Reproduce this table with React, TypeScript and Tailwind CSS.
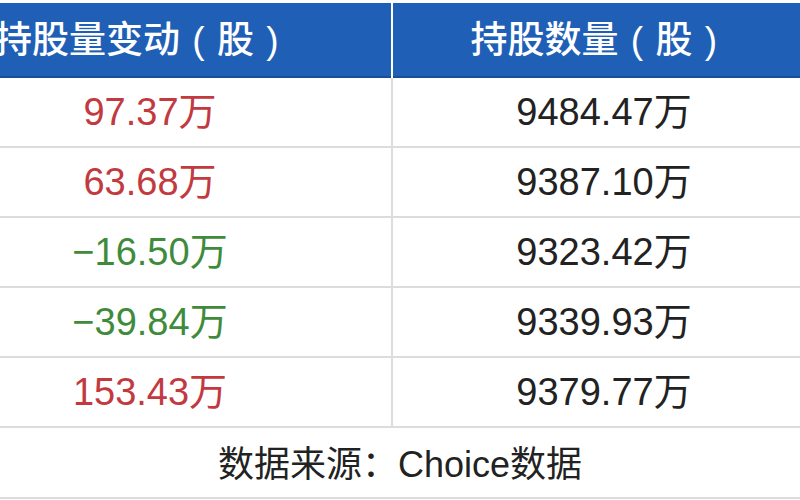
import React from "react";

const rows = [
  { change: "97.37万", color: "text-[#c23a40]", total: "9484.47万" },
  { change: "63.68万", color: "text-[#c23a40]", total: "9387.10万" },
  { change: "−16.50万", color: "text-[#3f8b3c]", total: "9323.42万" },
  { change: "−39.84万", color: "text-[#3f8b3c]", total: "9339.93万" },
  { change: "153.43万", color: "text-[#c23a40]", total: "9379.77万" },
];

function Paren({ ch }: { ch: string }) {
  return <span className="inline-block w-[1em] text-center font-normal">{ch}</span>;
}

export default function App() {
  return (
    <div className="w-[800px] h-[500px] overflow-hidden bg-white pt-[3px] font-['Liberation_Sans','Noto_Sans_CJK_SC',sans-serif]">
      <div className="-ml-[91px] w-[906px]">
        <div className="flex h-[75px] bg-[#1f60b6] text-white text-[37px] font-medium shadow-[inset_0_-2px_0_#174f9c]">
          <div className="w-[484px] flex items-center justify-center border-r-2 border-white pr-[14px]">
            <span>持股量变动</span>
            <Paren ch="(" />
            <span>股</span>
            <Paren ch=")" />
          </div>
          <div className="flex-1 flex items-center justify-center pr-[8px]">
            <span>持股数量</span>
            <Paren ch="(" />
            <span>股</span>
            <Paren ch=")" />
          </div>
        </div>
        {rows.map((r, i) => (
          <div key={i} className="flex h-[70px] border-b-2 border-[#dcdcdc] text-[38px]">
            <div className={`w-[484px] flex items-center justify-center border-r-2 border-[#dcdcdc] ${r.color}`}>
              {r.change}
            </div>
            <div className="flex-1 flex items-center justify-center text-[#222222]">
              {r.total}
            </div>
          </div>
        ))}
      </div>
      <div className="h-[71px] flex items-center justify-center border-b-2 border-[#dcdcdc] text-[36px] text-[#222222] pt-[4px]">
        数据来源：Choice数据
      </div>
    </div>
  );
}
